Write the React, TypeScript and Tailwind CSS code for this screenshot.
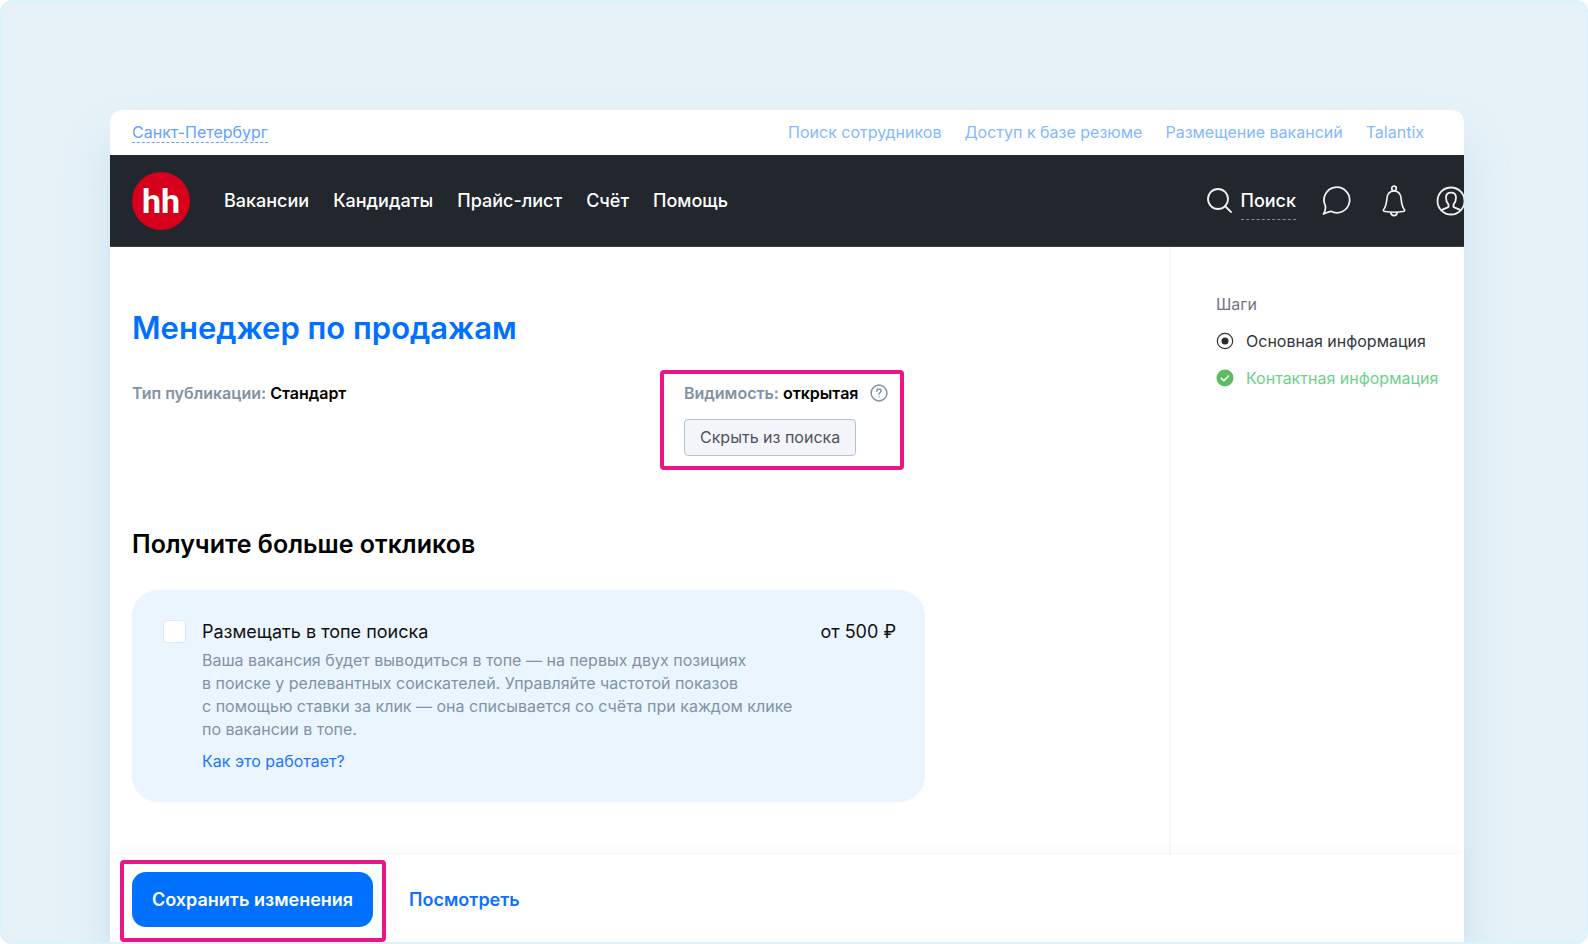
import { useState } from "react";

const topLinks = ["Поиск сотрудников", "Доступ к базе резюме", "Размещение вакансий", "Talantix"];
const navLinks = ["Вакансии", "Кандидаты", "Прайс-лист", "Счёт", "Помощь"];

function Logo() {
  return (
    <a href="#" aria-label="hh" className="block shrink-0">
      <svg width="58" height="58" viewBox="0 0 58 58">
        <circle cx="29" cy="29" r="29" fill="#d6001c" />
        <text x="29" y="41" textAnchor="middle" fill="#fff" fontFamily="Roboto, sans-serif" fontWeight="700" fontSize="34">
          hh
        </text>
      </svg>
    </a>
  );
}

function SearchIcon() {
  return (
    <svg width="27" height="28" viewBox="0 0 27 28" fill="none" stroke="#f1f1f1" strokeWidth="1.8" strokeLinecap="round">
      <circle cx="12" cy="12" r="10" />
      <path d="M19 19l6 6" />
    </svg>
  );
}

function ChatIcon() {
  return (
    <svg width="30" height="30" viewBox="0 0 30 30" fill="none" stroke="#f1f1f1" strokeWidth="1.8" strokeLinejoin="round">
      <path d="M1.500 28C3.200 25.500 3.800 23 3.400 19.800A12.800 12.800 0 1 1 8.800 25.300C6.800 25.600 4.500 26.800 1.500 28Z" />
    </svg>
  );
}

function BellIcon() {
  return (
    <svg width="24" height="32" viewBox="0 0 24 32" fill="none" stroke="#f1f1f1" strokeWidth="1.700" strokeLinejoin="round">
      <circle cx="12" cy="3.500" r="2.300" />
      <path d="M12 6C7.500 6 5.300 9.500 4.900 13.500C4.500 19 3.500 22.500 1.300 25C1.300 26 2 26.500 3 26.500Q12 28 21 26.500C22 26.500 22.700 26 22.700 25C20.500 22.500 19.500 19 19.100 13.500C18.700 9.500 16.500 6 12 6Z" />
      <path d="M8.500 27.300C9 29.500 10.300 30.600 12 30.600S15 29.500 15.500 27.300" />
    </svg>
  );
}

function UserIcon() {
  return (
    <svg width="30" height="30" viewBox="0 0 30 30" fill="none" stroke="#f1f1f1" strokeWidth="1.800" strokeLinejoin="round">
      <circle cx="15" cy="15" r="13.500" />
      <path d="M5.500 24.500C7 22.500 9.500 22.500 11.500 21.500C12.800 20.800 12.800 19.500 12.300 18.200C10.700 16.500 10 14.500 10 11.500C10 8 12 6.600 15 6.600S20 8 20 11.500C20 14.500 19.300 16.500 17.700 18.200C17.200 19.500 17.200 20.800 18.500 21.500C20.500 22.500 23 22.500 24.500 24.500" />
    </svg>
  );
}

function HelpIcon() {
  return (
    <svg width="18" height="18" viewBox="0 0 18 18" fill="none" stroke="#8292a3" strokeWidth="1.500" strokeLinecap="round">
      <circle cx="9" cy="9" r="7.900" />
      <path d="M6.800 7.200C6.800 5.800 7.800 5 9 5S11.200 5.800 11.200 7C11.200 8.400 9 8.600 9 10.200" />
      <path d="M9 12.700v.1" />
    </svg>
  );
}

function CurrentStepIcon() {
  return (
    <svg width="18" height="18" viewBox="0 0 18 18" fill="none">
      <circle cx="9" cy="9" r="7.700" stroke="#333" strokeWidth="1.200" />
      <circle cx="9" cy="9" r="3.500" fill="#2b2b2b" />
    </svg>
  );
}

function DoneStepIcon() {
  return (
    <svg width="18" height="18" viewBox="0 0 18 18" fill="none">
      <circle cx="9" cy="9" r="8.500" fill="#5bbd60" />
      <path d="M5.300 9.200l2.500 2.500 4.800-4.700" stroke="#fff" strokeWidth="1.600" strokeLinecap="round" strokeLinejoin="round" />
    </svg>
  );
}

export default function App() {
  const [promote, setPromote] = useState(false);

  return (
    <div className="flex min-h-screen flex-col overflow-hidden rounded-xl border-2 border-[#dbf3fb] bg-[#e6f2f8] pt-27 pr-[122px] pl-27 font-[Inter,'Liberation_Sans',sans-serif] text-black">
      <div className="flex grow flex-col rounded-t-xl bg-white shadow-[0_32px_48px_rgba(120,170,205,0.22)]">
        {/* Region and product links */}
        <div className="flex h-[45px] items-center justify-between pr-10 pb-0.5 pl-[22px] text-base">
          <a href="#" className="border-b border-dashed border-[#64a1ff] pt-0.5 leading-5 text-[#64a1ff]">
            Санкт-Петербург
          </a>
          <nav className="flex gap-[23px] text-[#85b8ff]">
            {topLinks.map((label) => (
              <a key={label} href="#">
                {label}
              </a>
            ))}
          </nav>
        </div>

        <header className="flex h-[92px] items-center justify-between overflow-hidden border-b border-[#3b3f46] bg-[#22262d] pl-[22px] text-lg font-medium text-white">
          <div className="flex items-center gap-[34px]">
            <Logo />
            <nav className="flex gap-6">
              {navLinks.map((label) => (
                <a key={label} href="#">
                  {label}
                </a>
              ))}
            </nav>
          </div>
          <div className="-mr-0.5 flex items-center">
            <button type="button" className="flex items-center gap-2">
              <SearchIcon />
              <span className="border-b border-dashed border-[#8b8d91] pt-1.5 pb-1">Поиск</span>
            </button>
            <button type="button" aria-label="Чаты" className="ml-[26px]">
              <ChatIcon />
            </button>
            <button type="button" aria-label="Уведомления" className="ml-[30px]">
              <BellIcon />
            </button>
            <button type="button" aria-label="Профиль" className="ml-[30px]">
              <UserIcon />
            </button>
          </div>
        </header>

        <div className="flex grow">
          <main className="grow border-r-2 border-[#f7f7f7] px-[22px] pt-[61px] pb-[53px]">
            <h1 className="text-[31px] leading-10 font-semibold text-[#0070ff]">Менеджер по продажам</h1>

            <div className="mt-[33px] flex text-base leading-6 font-semibold">
              <p className="w-[552px] text-[#8292a3]">
                Тип публикации: <span className="text-black">Стандарт</span>
              </p>
              <div className="relative">
                <p className="flex items-center text-[#8292a3]">
                  Видимость:&nbsp;<span className="text-black">открытая</span>
                  <button type="button" aria-label="Подсказка" className="ml-3">
                    <HelpIcon />
                  </button>
                </p>
                <button
                  type="button"
                  className="mt-[14px] block h-[37px] rounded border border-[#b5c4d1] bg-[#f4f5fb] px-[15px] pb-0.5 font-normal text-[#4d525b]"
                >
                  Скрыть из поиска
                </button>
                <span className="pointer-events-none absolute -top-[11px] -right-4 -bottom-3.5 -left-6 rounded border-4 border-[#eb1489]" />
              </div>
            </div>

            <h2 className="mt-[72px] text-[25px] leading-8 font-semibold">Получите больше откликов</h2>

            <section className="mt-[30px] flex max-w-[793px] items-start rounded-[26px] bg-[#ebf5ff] pt-[30px] pr-[29px] pb-[29px] pl-[31px]">
              <input
                id="promote"
                type="checkbox"
                checked={promote}
                onChange={(e) => setPromote(e.target.checked)}
                className="size-[23px] shrink-0 appearance-none rounded border border-[#dfe8f2] bg-white checked:bg-[#0070ff]"
              />
              <div className="ml-4 grow">
                <label htmlFor="promote" className="block text-lg leading-6 text-[#111]">
                  Размещать в топе поиска
                </label>
                <p className="mt-[5px] text-base leading-[23px] text-[#8292a3]">
                  Ваша вакансия будет выводиться в топе — на первых двух позициях
                  <br />в поиске у релевантных соискателей. Управляйте частотой показов
                  <br />с помощью ставки за клик — она списывается со счёта при каждом клике
                  <br />
                  по вакансии в топе.
                </p>
                <a href="#" className="mt-2 inline-block leading-6 text-[#1a76ff]">
                  Как это работает?
                </a>
              </div>
              <span className="shrink-0 text-lg leading-6 text-[#111]">от 500 ₽</span>
            </section>
          </main>

          <aside className="w-[293px] shrink-0 pt-[45px] pl-[45px] text-base leading-6">
            <p className="text-[#6f7782]">Шаги</p>
            <ul className="mt-[13px] flex flex-col gap-[13px]">
              <li className="flex items-center gap-3 text-[#33363b]">
                <CurrentStepIcon />
                Основная информация
              </li>
              <li className="flex items-center gap-3 text-[#6ed08a]">
                <DoneStepIcon />
                Контактная информация
              </li>
            </ul>
          </aside>
        </div>

        {/* Sticky actions */}
        <footer className="flex items-center bg-white px-[22px] pt-[17px] pb-[15px] text-lg font-semibold shadow-[0_-4px_10px_rgba(0,0,0,0.03)]">
          <div className="relative">
            <button type="button" className="h-[55px] rounded-[14px] bg-[#0070ff] px-5 text-white">
              Сохранить изменения
            </button>
            <span className="pointer-events-none absolute -top-3 -right-[13px] -bottom-[15px] -left-3 rounded border-4 border-[#eb1489]" />
          </div>
          <a href="#" className="ml-9 text-[#0f6fff]">
            Посмотреть
          </a>
        </footer>
      </div>
    </div>
  );
}
